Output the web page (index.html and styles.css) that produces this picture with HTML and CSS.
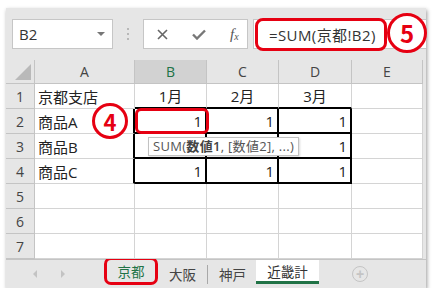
FILE: index.html
```html
<!DOCTYPE html>
<html lang="ja">
<head>
    <meta charset="UTF-8">
    <title>SUM 3D reference</title>
    <link rel="stylesheet" href="styles.css">
</head>
<body>
    <div class="window">
        <div class="toolbar">
            <div class="namebox"><span>B2</span><span class="caret"></span></div>
            <div class="grip"><i></i><i></i><i></i></div>
            <div class="fxbox">
                <svg class="ico" width="11" height="11" viewBox="0 0 11 11"><path d="M1 1 L10 10 M10 1 L1 10" stroke="#666" stroke-width="1.6" fill="none"/></svg>
                <svg class="ico" width="14" height="11" viewBox="0 0 14 11"><path d="M1 5.5 L5 9.5 L13 1.5" stroke="#777" stroke-width="2.4" fill="none"/></svg>
                <span class="fx">f<sub>x</sub></span>
            </div>
            <div class="formula"><span class="hl">=SUM(京都!B2)</span></div>
            <div class="callout callout-5">5</div>
        </div>

        <div class="sheet">
            <div class="c h corner"></div>
            <div class="c h">A</div>
            <div class="c h sel">B</div>
            <div class="c h">C</div>
            <div class="c h">D</div>
            <div class="c h">E</div>

            <div class="c h">1</div>
            <div class="c">京都支店</div>
            <div class="c m bb">1月</div>
            <div class="c m bb">2月</div>
            <div class="c m bb">3月</div>
            <div class="c"></div>

            <div class="c h">2</div>
            <div class="c br">商品A</div>
            <div class="c n box">1</div>
            <div class="c n box">1</div>
            <div class="c n box">1</div>
            <div class="c"></div>

            <div class="c h">3</div>
            <div class="c br">商品B</div>
            <div class="c n box"></div>
            <div class="c n box"></div>
            <div class="c n box">1</div>
            <div class="c"></div>

            <div class="c h">4</div>
            <div class="c br">商品C</div>
            <div class="c n box">1</div>
            <div class="c n box">1</div>
            <div class="c n box">1</div>
            <div class="c"></div>

            <div class="c h">5</div>
            <div class="c"></div><div class="c"></div><div class="c"></div><div class="c"></div><div class="c"></div>
            <div class="c h">6</div>
            <div class="c"></div><div class="c"></div><div class="c"></div><div class="c"></div><div class="c"></div>
            <div class="c h">7</div>
            <div class="c"></div><div class="c"></div><div class="c"></div><div class="c"></div><div class="c"></div>

            <div class="mark"></div>
            <div class="tip">SUM(<b>数値1</b>, [数値2], ...)</div>
            <div class="callout callout-4">4</div>
        </div>

        <div class="tabs">
            <div class="nav"><span class="arr left"></span><span class="arr right"></span></div>
            <div class="tab ref">京都</div>
            <div class="tab">大阪</div>
            <div class="sep"></div>
            <div class="tab">神戸</div>
            <div class="tab active">近畿計</div>
            <div class="plus">+</div>
        </div>
    </div>
</body>
</html>
```

FILE: styles.css
```css
body {
    margin: 0;
    background: #fff;
    font-family: "Open Sans", "Noto Sans CJK JP", sans-serif;
    color: #222;
}

.window {
    position: relative;
    margin: 8px 0 0 6px;
    width: 420px;
    height: 280px;
    background: #e6e6e6;
    box-shadow: 1px 2px 4px rgba(0, 0, 0, 0.4);
    display: flex;
    flex-direction: column;
}

/* formula bar */
.toolbar {
    height: 52px;
    box-sizing: border-box;
    padding: 11px 0 0 6px;
    display: flex;
    align-items: flex-start;
}

.namebox {
    width: 101px;
    height: 30px;
    box-sizing: border-box;
    border: 1px solid #c6c6c6;
    background: #fff;
    display: flex;
    align-items: center;
    justify-content: space-between;
    padding: 0 7px 0 6px;
    font-size: 15px;
    color: #333;
}

.caret {
    border-left: 4px solid transparent;
    border-right: 4px solid transparent;
    border-top: 4px solid #777;
}

.grip {
    width: 30px;
    height: 30px;
    display: flex;
    flex-direction: column;
    align-items: center;
    justify-content: center;
    gap: 3px;
}

.grip i {
    width: 2px;
    height: 2px;
    background: #b8b8b8;
}

.fxbox {
    width: 105px;
    height: 30px;
    box-sizing: border-box;
    border: 1px solid #c6c6c6;
    background: #fff;
    display: flex;
    align-items: center;
    padding-left: 13px;
    gap: 24px;
}

.fx {
    font-family: "Liberation Serif", serif;
    font-style: italic;
    font-size: 15px;
    color: #555;
    line-height: 1;
}

.fx sub {
    font-size: 10px;
    vertical-align: -1px;
}

.formula {
    flex: 1;
    margin-left: 5px;
    height: 30px;
    box-sizing: border-box;
    border: 1px solid #c6c6c6;
    border-right: none;
    background: #fff;
    display: flex;
    align-items: center;
}

.hl {
    width: 132px;
    height: 33px;
    box-sizing: border-box;
    margin-left: 1px;
    border: 3px solid #e60012;
    border-radius: 8px;
    padding-left: 11px;
    display: flex;
    align-items: center;
    font-size: 15px;
    letter-spacing: 0.4px;
    color: #333;
    flex-shrink: 0;
    white-space: nowrap;
}

.callout {
    position: absolute;
    box-sizing: border-box;
    border: 3px solid #e60012;
    border-radius: 50%;
    background: #fff;
    color: #e60012;
    font-family: "Noto Sans CJK JP", sans-serif;
    font-weight: bold;
    display: flex;
    align-items: center;
    justify-content: center;
    line-height: 1;
}

.callout-5 {
    left: 381px;
    top: 5px;
    width: 40px;
    height: 40px;
    font-size: 24px;
}

/* grid */
.sheet {
    position: relative;
    display: grid;
    grid-template-columns: 29px 100px 72px 72px 73px 71px;
    grid-template-rows: 24px repeat(7, 25px);
    width: 417px;
}

.c {
    box-sizing: border-box;
    border-right: 1px solid #d4d4d4;
    border-bottom: 1px solid #d4d4d4;
    background: #fff;
    font-size: 15px;
    padding: 0 3px;
    white-space: nowrap;
    display: flex;
    align-items: center;
}

.h {
    background: #e6e6e6;
    border-color: #c4c4c4;
    justify-content: center;
    font-size: 14px;
    color: #444;
    padding: 0;
}

.h.sel {
    background: #d2d2d2;
    color: #217346;
}

.corner {
    position: relative;
}

.corner::after {
    content: "";
    position: absolute;
    right: 3px;
    bottom: 3px;
    border-left: 16px solid transparent;
    border-bottom: 16px solid #b9b9b9;
}

.m {
    justify-content: center;
}

.n {
    justify-content: flex-end;
}

.bb {
    border-bottom: 2px solid #000;
}

.br {
    border-right: 2px solid #000;
}

.box {
    border-right: 2px solid #000;
    border-bottom: 2px solid #000;
}

.mark {
    position: absolute;
    left: 129px;
    top: 48px;
    width: 74px;
    height: 26px;
    box-sizing: border-box;
    border: 3px solid #e60012;
    border-radius: 6px;
}

.tip {
    position: absolute;
    left: 142px;
    top: 77px;
    height: 19px;
    box-sizing: border-box;
    padding: 0 4px;
    border: 1px solid #c2c2c2;
    background: #fff;
    box-shadow: 1px 1px 2px rgba(0, 0, 0, 0.15);
    font-size: 13px;
    letter-spacing: 0.3px;
    line-height: 17px;
    color: #555;
    white-space: nowrap;
}

.tip b {
    color: #444;
    font-weight: 600;
}

.callout-4 {
    left: 86px;
    top: 43px;
    width: 36px;
    height: 36px;
    font-size: 22px;
}

/* sheet tabs */
.tabs {
    height: 29px;
    box-sizing: border-box;
    border-top: 1px solid #c4c4c4;
    display: flex;
    align-items: center;
}

.nav {
    width: 98px;
    box-sizing: border-box;
    padding-left: 27px;
    display: flex;
    gap: 24px;
}

.arr {
    border-top: 4px solid transparent;
    border-bottom: 4px solid transparent;
}

.arr.left {
    border-right: 4px solid #c3c3c3;
}

.arr.right {
    border-left: 4px solid #c3c3c3;
}

.tab {
    width: 49px;
    height: 24px;
    display: flex;
    align-items: center;
    justify-content: center;
    font-size: 13.5px;
    color: #444;
}

.tab.ref {
    width: 54px;
    height: 28px;
    box-sizing: border-box;
    align-self: flex-start;
    margin-top: -3px;
    border: 3px solid #e60012;
    border-radius: 7px;
    color: #217346;
}

.sep {
    width: 1px;
    height: 19px;
    background: #a8a8a8;
}

.tab.active {
    width: 63px;
    box-sizing: border-box;
    align-self: flex-start;
    background: #fff;
    border-bottom: 3px solid #217346;
    color: #333;
    margin-left: -1px;
}

.plus {
    margin-left: 33px;
    width: 16px;
    height: 16px;
    box-sizing: border-box;
    border: 1.5px solid #c4c4c4;
    border-radius: 50%;
    color: #c4c4c4;
    font-family: "Liberation Sans", sans-serif;
    font-weight: bold;
    font-size: 14px;
    line-height: 1;
    display: flex;
    align-items: center;
    justify-content: center;
}
```
